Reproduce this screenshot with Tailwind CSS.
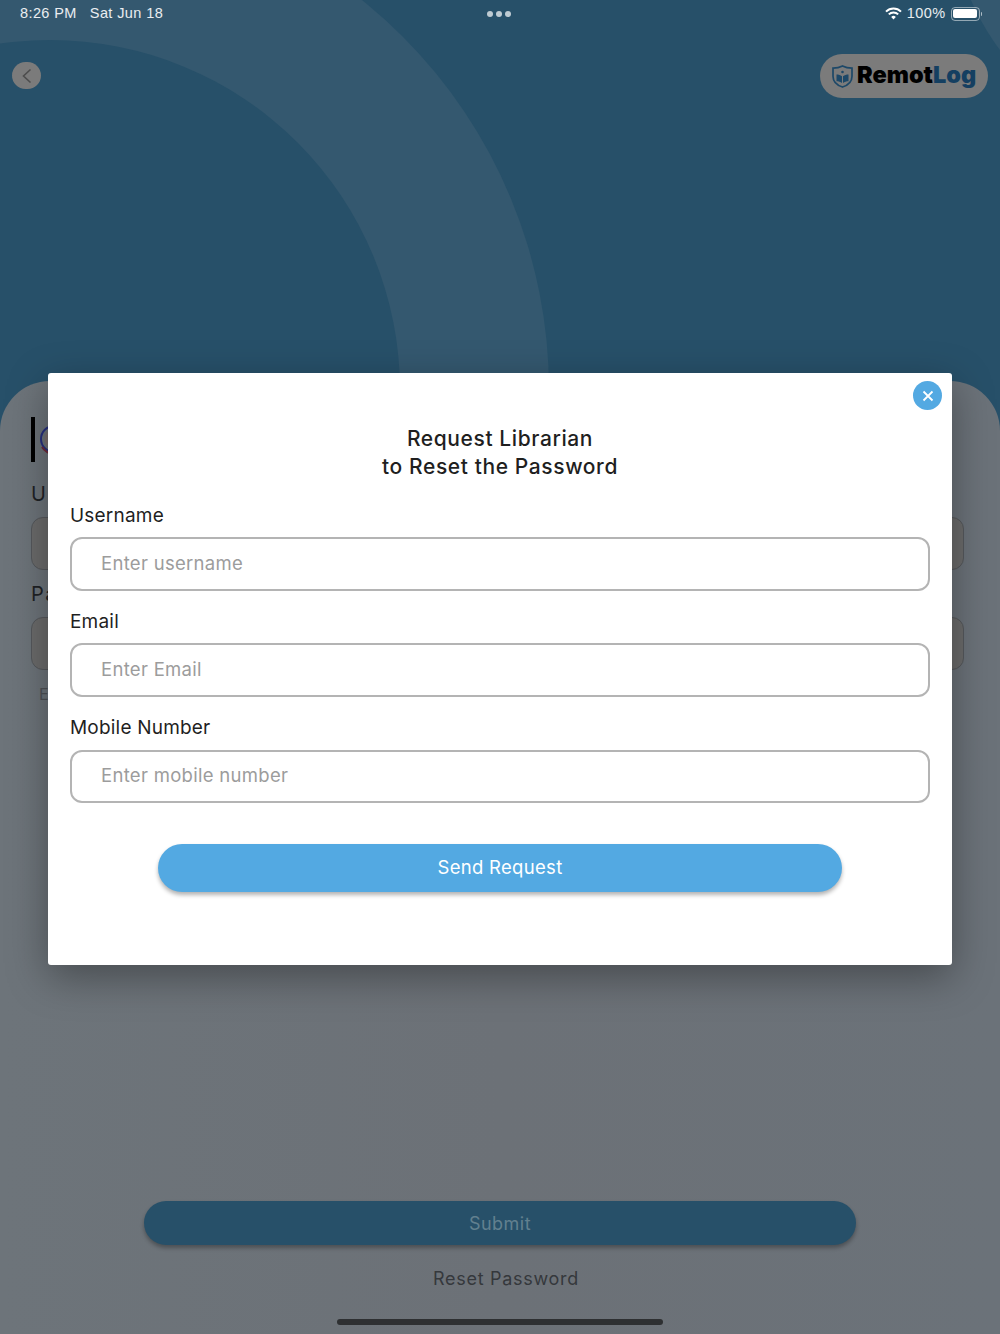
<!DOCTYPE html>
<html lang="en">
<head>
  <meta charset="UTF-8">
  <meta name="viewport" content="width=device-width, initial-scale=1.0">
  <title>Request Librarian | RemotLog</title>
  <script src="https://cdn.jsdelivr.net/npm/@tailwindcss/browser@4"></script>
</head>
<body class="bg-[#275069] font-['Inter',sans-serif]">
  <div class="relative w-[1000px] h-[1334px] overflow-hidden flex flex-col bg-[#275069]">

    <!-- background circles -->
    <div class="absolute left-[-451px] top-[-110px] w-[1000px] h-[1000px] rounded-full bg-[#34586f]"></div>
    <div class="absolute left-[-300px] top-[40px] w-[700px] h-[700px] rounded-full bg-[#275069]"></div>
    <div class="absolute left-[950px] top-[-350px] w-[500px] h-[500px] rounded-full bg-[#34586f]"></div>

    <!-- status bar -->
    <div class="relative h-[28px] px-[20px] flex items-center justify-between text-white/90 text-[14.5px] font-['Liberation_Sans',sans-serif] tracking-[0.4px]">
      <div class="flex gap-[13px] -mt-[1px]"><span>8:26 PM</span><span>Sat Jun 18</span></div>
      <div class="absolute left-[487px] top-[11px] flex gap-[3px]">
        <span class="w-[6px] h-[6px] rounded-full bg-white/70"></span>
        <span class="w-[6px] h-[6px] rounded-full bg-white/70"></span>
        <span class="w-[6px] h-[6px] rounded-full bg-white/70"></span>
      </div>
      <div class="flex items-center gap-[5px] -mr-[2px] -mt-[1px]">
        <svg width="17" height="13" viewBox="0 0 17 13" fill="none" stroke="white" stroke-width="2">
          <path d="M1 4.6a10.6 10.6 0 0 1 15 0"/><path d="M3.8 7.4a6.6 6.6 0 0 1 9.4 0"/><path d="M8.5 12.5 6.2 10a3.2 3.2 0 0 1 4.6 0z" fill="white" stroke="none"/>
        </svg>
        <span>100%</span>
        <div class="flex items-center gap-[1px]">
          <div class="w-[29px] h-[14px] rounded-[4px] border border-white/50 p-[1.5px]"><div class="w-full h-full rounded-[2px] bg-white"></div></div>
          <div class="w-[1.5px] h-[4px] rounded-r bg-white/60"></div>
        </div>
      </div>
    </div>

    <!-- header -->
    <div class="relative h-[353px] pl-[12px] pr-[12px] flex justify-between items-start">
      <div class="mt-[34px] w-[29px] h-[27px] rounded-full bg-[#7b7b7b] flex items-center justify-center">
        <svg width="12" height="16" viewBox="0 0 12 16" fill="none" stroke="#4d4d4d" stroke-width="1.6"><path d="M9.5 1.500 2.500 8l7 6.500"/></svg>
      </div>
      <div class="mt-[26px] w-[168px] h-[44px] rounded-[22px] bg-[#7b7b7b] flex items-center pl-[11px] gap-[3px]">
        <svg width="23" height="25" viewBox="0 0 23 25" fill="none">
          <path d="M11.5 2C8.5 3.6 5 4.2 2 4.2v8c0 5.4 4 9 9.5 10.8C17 21.200 21 17.600 21 12.200v-8c-3 0-6.500-.6-9.500-2.200z" stroke="#1d4868" stroke-width="1.700"/>
          <path d="M5.500 10.500c2 0 4 .5 5.500 1.700V19c-1.500-1.200-3.500-1.700-5.500-1.700zM17.500 10.500c-2 0-4 .5-5.500 1.700V19c1.500-1.200 3.500-1.700 5.500-1.700z" fill="#1d4868"/>
          <circle cx="11.500" cy="8" r="1.300" fill="#1d4868"/>
        </svg>
        <span class="text-[23.5px] leading-none font-black tracking-[0px] text-black -mt-[2px]">Remot<span class="text-[#143f61]">Log</span></span>
      </div>
    </div>

    <!-- login sheet behind the dialog -->
    <div class="relative flex-1 rounded-t-[50px] bg-gradient-to-r from-[#6d747a] via-[#6c7177] to-[#6b7279] pl-[31px] pr-[36px] pt-[36px] flex flex-col">
      <div class="flex h-[45px] items-center">
        <div class="w-[4px] h-[45px] bg-black"></div>
        <svg width="24" height="45" viewBox="0 0 24 45" fill="none" class="ml-[3px]">
          <circle cx="16" cy="22" r="13" stroke="#27307f" stroke-width="2"/>
          <circle cx="16" cy="22" r="8" stroke="#7b6f6f" stroke-width="3"/>
          <path d="M4 30c3 5 8 7 13 8" stroke="#6d2b3a" stroke-width="2"/>
        </svg>
      </div>
      <p class="mt-[20px] text-[20px] leading-[24px] tracking-[1.5px] text-[#1f2226]">Username</p>
      <div class="mt-[11px] h-[53px] rounded-[12px] border border-[#55585c] bg-[#6b6b6b]"></div>
      <p class="mt-[12px] text-[20px] leading-[24px] tracking-[1.5px] text-[#1f2226]">Password</p>
      <div class="mt-[11px] h-[53px] rounded-[12px] border border-[#55585c] bg-[#6b6b6b]"></div>
      <p class="mt-[13px] pl-[8px] text-[16px] leading-[22px] text-[#4f5256]">Enter</p>

      <div class="mt-[496px] ml-[113px] mr-[108px] h-[44px] rounded-full bg-[#275069] shadow-[0_3px_4px_rgba(0,0,0,0.3)] flex items-center justify-center text-[18px] text-[#62808f] tracking-[0.5px]">Submit</div>
      <p class="mt-[22px] pl-[17px] text-center text-[18px] leading-[24px] text-[#35383c] tracking-[0.7px]">Reset Password</p>
      <div class="absolute left-[337px] top-[938px] w-[326px] h-[6px] rounded-full bg-[#2e3032]"></div>
    </div>

    <!-- request dialog -->
    <div class="absolute left-[48px] top-[373px] w-[904px] h-[592px] rounded-[3px] bg-white shadow-[0_12px_40px_rgba(0,0,0,0.35)] px-[22px] pt-[52px]">
      <button class="absolute right-[10px] top-[8px] w-[29px] h-[29px] rounded-full bg-[#53a9e2] flex items-center justify-center">
        <svg width="12" height="12" viewBox="0 0 12 12" stroke="white" stroke-width="1.800" fill="none"><path d="M1.500 1.500l9 9M10.500 1.500l-9 9"/></svg>
      </button>
      <h2 class="text-center text-[21px] leading-[28px] font-medium text-[#1f1f1f] tracking-[0.6px]">Request Librarian<br>to Reset the Password</h2>

      <label class="block mt-[23px] text-[19px] leading-[24px] text-[#1f1f1f] tracking-[0.2px]">Username</label>
      <input type="text" placeholder="Enter username" class="block mt-[9px] w-full h-[54px] pb-[2px] rounded-[12px] border-2 border-[#b4b4b4] pl-[29px] text-[18.5px] tracking-[0.3px] placeholder:text-[#9c9c9c] outline-none">

      <label class="block mt-[19px] text-[19px] leading-[24px] text-[#1f1f1f] tracking-[0.2px]">Email</label>
      <input type="text" placeholder="Enter Email" class="block mt-[9px] w-full h-[54px] pb-[2px] rounded-[12px] border-2 border-[#b4b4b4] pl-[29px] text-[18.5px] tracking-[0.3px] placeholder:text-[#9c9c9c] outline-none">

      <label class="block mt-[19px] text-[19px] leading-[24px] text-[#1f1f1f] tracking-[0.2px]">Mobile Number</label>
      <input type="text" placeholder="Enter mobile number" class="block mt-[10px] w-full h-[53px] pb-[3px] rounded-[12px] border-2 border-[#b4b4b4] pl-[29px] text-[18.5px] tracking-[0.3px] placeholder:text-[#9c9c9c] outline-none">

      <button class="block mt-[41px] mx-[88px] w-[684px] h-[48px] rounded-full bg-[#53a9e2] shadow-[0_3px_4px_rgba(0,0,0,0.3)] text-white text-[18.5px] tracking-[0.3px]">Send Request</button>
    </div>
  </div>
</body>
</html>
